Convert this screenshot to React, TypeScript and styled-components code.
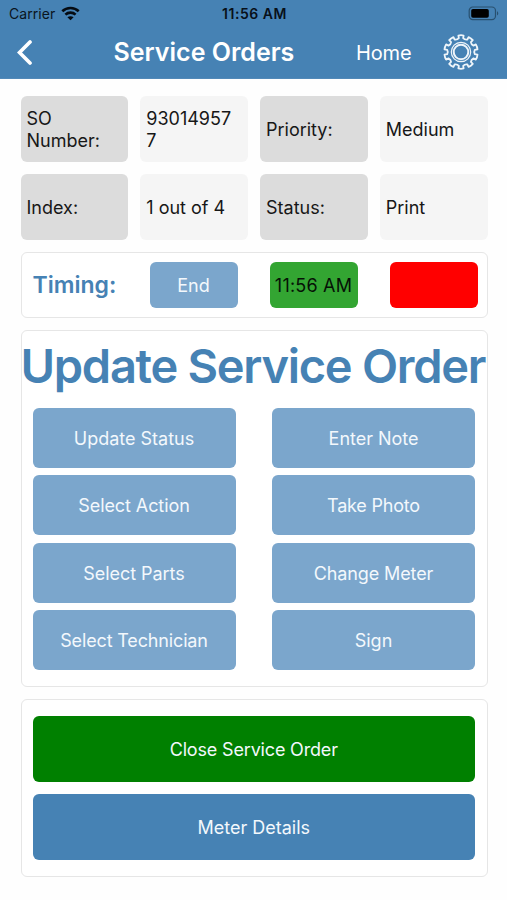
import React from 'react';
import styled, { createGlobalStyle } from 'styled-components';

const blue = '#4682b4';
const lightBlue = '#7ba6cc';

const GlobalStyle = createGlobalStyle`
  *, *::before, *::after { box-sizing: border-box; }
  body {
    margin: 0;
    background: #fefefe;
    font-family: Inter, "Noto Sans", sans-serif;
    -webkit-font-smoothing: antialiased;
  }
  button { font-family: inherit; border: 0; padding: 0; margin: 0; }
`;

const Screen = styled.div`
  width: 507px;
  height: 900px;
  overflow: hidden;
  background: #fefefe;
`;

const Header = styled.header`
  height: 79px;
  background: ${blue};
  border-bottom: 1px solid #5289b8;
`;

const StatusBar = styled.div`
  display: grid;
  grid-template-columns: 1fr auto 1fr;
  align-items: center;
  height: 27px;
  padding: 0 7px 0 9px;
  font-size: 14px;
  color: #0a1420;
`;

const Carrier = styled.div`
  display: flex;
  align-items: center;
  gap: 6px;
  letter-spacing: 0.05px;
`;

const Clock = styled.time`
  font-weight: 600;
  letter-spacing: 0.55px;
  color: #081019;
`;

const Battery = styled.svg`
  justify-self: end;
`;

const NavBar = styled.nav`
  display: grid;
  grid-template-columns: 96.5px 242.5px 84.5px 1fr;
  align-items: center;
  height: 50px;
  padding-left: 17px;
  color: #fff;
`;

const IconButton = styled.button`
  display: flex;
  width: max-content;
  background: transparent;
  color: inherit;
`;

const Title = styled.h1`
  margin: 0;
  font-size: 25px;
  line-height: 30px;
  font-weight: 600;
`;

const HomeLink = styled.span`
  font-size: 20px;
  line-height: 24px;
  letter-spacing: -0.15px;
  padding-top: 1px;
`;

const Content = styled.main`
  display: flex;
  flex-direction: column;
  gap: 12.5px;
  padding: 17px 19.5px 0 20.5px;
`;

const InfoGrid = styled.dl`
  display: grid;
  grid-template-columns: repeat(4, 1fr);
  grid-auto-rows: 65.5px;
  gap: 12.5px 12px;
  margin: 0;
`;

const InfoCell = styled.div<{ $label?: boolean }>`
  display: flex;
  align-items: center;
  margin: 0;
  padding: 2px 10px 0 6px;
  border-radius: 6px;
  background: ${(p) => (p.$label ? '#dcdcdc' : '#f5f5f5')};
  color: #171717;
  font-size: 18px;
  line-height: 21.5px;
  overflow-wrap: anywhere;
`;

const Panel = styled.section`
  border: 1.5px solid #e6e6e6;
  border-radius: 6px;
  background: #fff;
`;

const TimingPanel = styled(Panel)`
  display: grid;
  grid-template-columns: 85px repeat(3, 88px);
  column-gap: 32px;
  align-items: center;
  height: 65.5px;
  padding-left: 11px;
`;

const TimingLabel = styled.h2`
  margin: 0;
  font-size: 23px;
  line-height: 28px;
  font-weight: 600;
  color: ${blue};
`;

const Button = styled.button<{ $bg: string; $height: number; $color?: string; $tracking?: number }>`
  display: flex;
  align-items: center;
  justify-content: center;
  height: ${(p) => p.$height}px;
  padding-top: 2px;
  border-radius: 6px;
  background: ${(p) => p.$bg};
  color: ${(p) => p.$color ?? '#f3f8fc'};
  font-size: 18px;
  line-height: 22px;
  letter-spacing: ${(p) => p.$tracking ?? 0}px;
  white-space: nowrap;
`;

const UpdatePanel = styled(Panel)`
  height: 356.5px;
`;

const UpdateHeading = styled.h2`
  margin: 7px 0 13.5px -1px;
  font-size: 47px;
  line-height: 56px;
  font-weight: 600;
  letter-spacing: -1.28px;
  white-space: nowrap;
  color: ${blue};
`;

const ActionGrid = styled.div`
  display: grid;
  grid-template-columns: repeat(2, 203px);
  gap: 7.5px 36.5px;
  padding-left: 11px;
`;

const FooterPanel = styled(Panel)`
  display: flex;
  flex-direction: column;
  gap: 12.5px;
  height: 177.5px;
  padding: 16px 11.5px 0 11px;
`;

const point = (r: number, deg: number) => {
  const a = ((deg - 90) * Math.PI) / 180;
  return `${(20 + r * Math.cos(a)).toFixed(2)} ${(20 + r * Math.sin(a)).toFixed(2)}`;
};

const TEETH = 10;
const gearOutline =
  Array.from({ length: TEETH }, (_, i) => {
    const c = (i * 360) / TEETH;
    return `${i ? 'L' : 'M'}${point(14, c - 9)} L${point(16.7, c - 9)} Q${point(17.1, c)} ${point(16.7, c + 9)} L${point(14, c + 9)} Q${point(12.6, c + 18)} ${point(14, c + 27)}`;
  }).join(' ') + 'Z';

const GearIcon = () => (
  <svg width="40" height="40" viewBox="0 0 40 40" fill="none" stroke="#eef5fa" strokeWidth="1.8" strokeLinejoin="round">
    <path d={gearOutline} />
    <circle cx="20" cy="20" r="9.7" strokeWidth="1.2" />
    <circle cx="20" cy="20" r="7.3" strokeWidth="2" />
  </svg>
);

const BackIcon = () => (
  <svg width="16" height="27" viewBox="0 0 16 27" fill="none" stroke="#fff" strokeWidth="3.7" strokeLinecap="round">
    <path d="M13 3 L2.5 13.5 L13 24" />
  </svg>
);

const WifiIcon = () => (
  <svg width="19" height="15" viewBox="0 0 19 15" fill="none" stroke="#050b12" strokeWidth="2.6">
    <path d="M1.3 5.2 C5.8 0.9 13.2 0.9 17.7 5.2" />
    <path d="M4.4 8.6 C7.2 6 11.8 6 14.6 8.6" />
    <path d="M9.5 14.2 L6.4 11.2 C8.1 9.8 10.9 9.8 12.6 11.2 Z" fill="#050b12" stroke="none" />
  </svg>
);

const info: { text: string; label?: boolean }[] = [
  { text: 'SO Number:', label: true },
  { text: '930149577' },
  { text: 'Priority:', label: true },
  { text: 'Medium' },
  { text: 'Index:', label: true },
  { text: '1 out of 4' },
  { text: 'Status:', label: true },
  { text: 'Print' },
];

const actions: [string, number][] = [
  ['Update Status', 0],
  ['Enter Note', -0.03],
  ['Select Action', -0.08],
  ['Take Photo', -0.2],
  ['Select Parts', -0.05],
  ['Change Meter', -0.12],
  ['Select Technician', -0.15],
  ['Sign', 0],
];

export default function App() {
  return (
    <Screen>
      <GlobalStyle />
      <Header>
        <StatusBar>
          <Carrier>
            Carrier
            <WifiIcon />
          </Carrier>
          <Clock>11:56 AM</Clock>
          <Battery width="32" height="15" viewBox="0 0 32 15">
            <rect x="1.2" y="1" width="26.3" height="12.6" rx="3.6" fill="none" stroke="#28506f" strokeWidth="1.2" />
            <rect x="3.2" y="3" width="17.6" height="8.8" rx="1.8" fill="#000" />
            <path d="M29 5 Q31.6 7.3 29 9.6 Z" fill="#28506f" />
          </Battery>
        </StatusBar>
        <NavBar>
          <IconButton aria-label="Back">
            <BackIcon />
          </IconButton>
          <Title>Service Orders</Title>
          <HomeLink>Home</HomeLink>
          <IconButton aria-label="Settings">
            <GearIcon />
          </IconButton>
        </NavBar>
      </Header>
      <Content>
        <InfoGrid>
          {info.map(({ text, label }) => (
            <InfoCell key={text} as={label ? 'dt' : 'dd'} $label={label}>
              {text}
            </InfoCell>
          ))}
        </InfoGrid>
        <TimingPanel>
          <TimingLabel>Timing:</TimingLabel>
          <Button $bg={lightBlue} $height={46}>End</Button>
          <Button $bg="#33a532" $height={46} $color="#061206" $tracking={0.2}>11:56 AM</Button>
          <Button $bg="#ff0000" $height={46} aria-label="End time" />
        </TimingPanel>
        <UpdatePanel>
          <UpdateHeading>Update Service Order</UpdateHeading>
          <ActionGrid>
            {actions.map(([text, tracking]) => (
              <Button key={text} $bg={lightBlue} $height={60} $tracking={tracking}>
                {text}
              </Button>
            ))}
          </ActionGrid>
        </UpdatePanel>
        <FooterPanel>
          <Button $bg="#008000" $height={65.5} $tracking={-0.17}>Close Service Order</Button>
          <Button $bg={blue} $height={65.5}>Meter Details</Button>
        </FooterPanel>
      </Content>
    </Screen>
  );
}
